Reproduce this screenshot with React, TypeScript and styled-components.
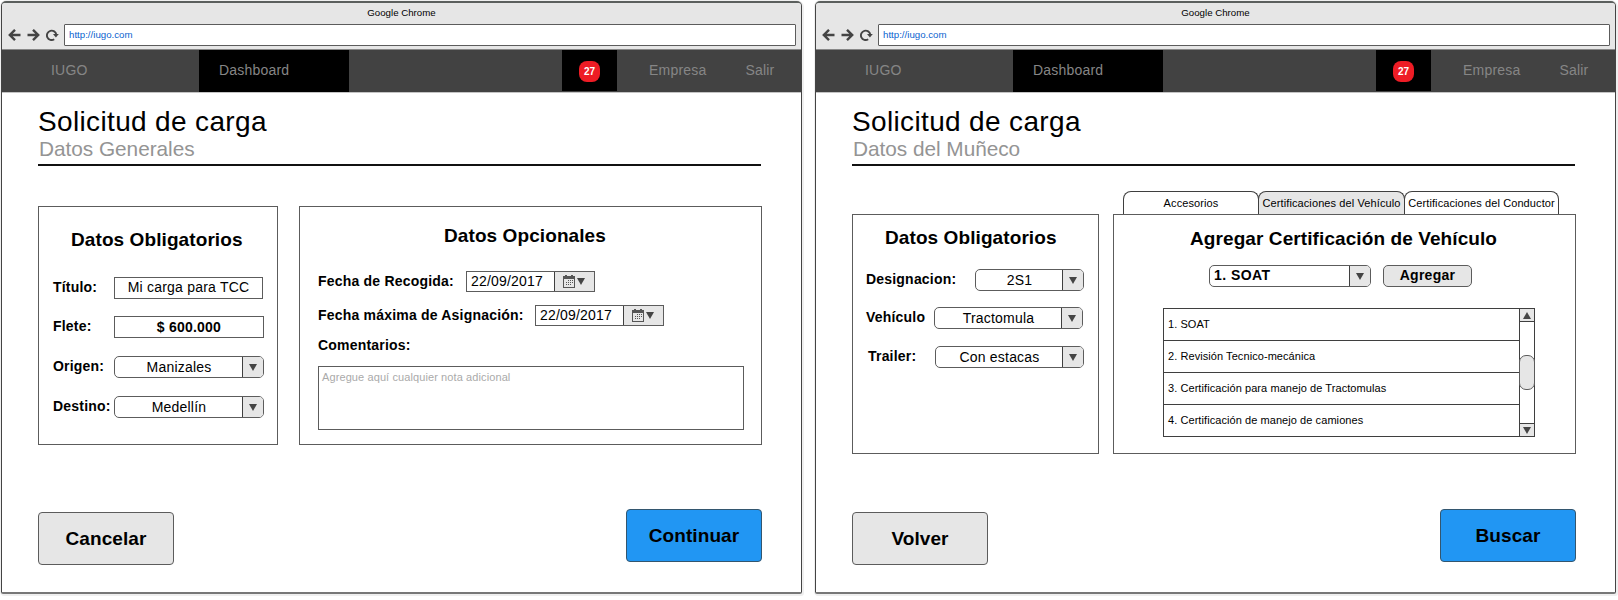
import React from "react";
import styled, { createGlobalStyle, css } from "styled-components";

const LINE = "#5c5c5c";
const DARK = "#3f3f3f";
const FILL = "#e6e6e6";

const GlobalStyle = createGlobalStyle`
  * { box-sizing: border-box; }
  body {
    margin: 0;
    background: #fff;
    overflow: hidden;
    font-family: "Liberation Sans", Arial, sans-serif;
    color: #000;
  }
  h1, h2, h3, p, ul { margin: 0; padding: 0; }
`;

const Board = styled.main`
  display: flex;
  gap: 13px;
  width: 1618px;
  height: 600px;
  padding: 1px 0 0 1px;
`;

const Window = styled.section`
  display: flex;
  flex-direction: column;
  width: 801px;
  height: 593px;
  border: 1px solid #444;
  border-top: 2px solid #5b5f5d;
  border-bottom: 2px solid #777;
  border-radius: 5px 5px 2px 2px;
  box-shadow: 0 0 0 1px #efefef, 1px 1px 0 1px #efefef;
`;

const Chrome = styled.header`
  height: 47px;
  flex: none;
  background: ${FILL};
  border-bottom: 1px solid #888;
  border-radius: 3px 3px 0 0;
`;

const ChromeTitle = styled.div`
  height: 21px;
  line-height: 20px;
  text-align: center;
  font-size: 9.7px;
`;

const ChromeBar = styled.div`
  display: flex;
  align-items: center;
  height: 22px;
  padding: 0 5px 0 6px;
`;

const ChromeIcon = styled.svg`
  flex: none;
  width: 13px;
  height: 13px;
  margin-right: 6px;
  fill: none;
  stroke: #444;
  stroke-width: 2.4;
`;

const Address = styled.div`
  flex: 1;
  height: 22px;
  margin-left: -1px;
  padding-left: 4px;
  border: 1px solid ${LINE};
  border-radius: 1px;
  background: #fff;
  line-height: 20px;
  font-size: 9.7px;
  color: #0a63cf;
`;

const Nav = styled.nav`
  display: flex;
  flex: none;
  height: 43px;
  background: #424242;
  border-bottom: 1px solid #c4c4c4;
  font-size: 14px;
  line-height: 41px;
  letter-spacing: 0.2px;
  color: #868686;
`;

const Brand = styled.div`
  width: 197px;
  padding-left: 49px;
`;

const ActiveItem = styled.div`
  width: 150px;
  height: 42px;
  padding-left: 20px;
  background: #000;
`;

const Notice = styled.div`
  display: flex;
  justify-content: center;
  width: 55px;
  height: 41px;
  margin-left: 213px;
  padding-top: 11px;
  background: #000;
`;

const Badge = styled.span`
  width: 21px;
  height: 21px;
  border-radius: 8px;
  background: #ee1c25;
  color: #fff;
  font-size: 10px;
  font-weight: bold;
  letter-spacing: 0;
  line-height: 21px;
  text-align: center;
`;

const NavLink = styled.div<{ $gap: number }>`
  margin-left: ${(p) => p.$gap}px;
`;

const Page = styled.div`
  flex: 1;
  display: flex;
  flex-direction: column;
  padding: 13px 39px 0 36px;
`;

const Title = styled.h1`
  font-size: 28px;
  font-weight: normal;
  letter-spacing: 0.35px;
  line-height: 31px;
`;

const Subtitle = styled.h2`
  height: 27px;
  padding-left: 1px;
  font-size: 20.8px;
  font-weight: normal;
  letter-spacing: -0.03px;
  line-height: 23px;
  color: #949494;
`;

const Rule = styled.div`
  height: 2px;
  margin-right: 1px;
  background: #111;
`;

const Body = styled.div`
  display: flex;
  align-items: flex-start;
  height: 343px;
`;

const Panel = styled.section<{ $w: number; $h?: number }>`
  flex: none;
  width: ${(p) => p.$w}px;
  height: ${(p) => p.$h ?? 240}px;
  border: 1px solid ${LINE};
`;

const RequiredPanel = styled(Panel)<{ $top: number; $gap: number }>`
  margin-top: ${(p) => p.$top}px;
  margin-right: ${(p) => p.$gap}px;
  padding-left: 13px;
`;

const OptionalPanel = styled(Panel)`
  margin-top: 40px;
  padding-left: 18px;
`;

const Heading = styled.h3<{ $top: number; $left: number }>`
  padding: ${(p) => p.$top}px 0 0 ${(p) => p.$left}px;
  font-size: 19px;
  font-weight: bold;
  letter-spacing: 0.09px;
  line-height: 21px;
  white-space: nowrap;
`;

const Row = styled.div<{ $gap: number; $h?: number; $indent?: number }>`
  display: flex;
  align-items: flex-start;
  height: ${(p) => p.$h ?? 22}px;
  margin-top: ${(p) => p.$gap}px;
  padding-left: ${(p) => p.$indent ?? 0}px;
`;

const Label = styled.label<{ $w: number; $indent?: number }>`
  flex: none;
  width: ${(p) => p.$w}px;
  padding-left: ${(p) => p.$indent ?? 0}px;
  font-size: 14px;
  font-weight: bold;
  letter-spacing: 0.2px;
  line-height: 20px;
  white-space: nowrap;
`;

const TextBox = styled.div<{ $strong?: boolean }>`
  width: ${(p) => (p.$strong ? 150 : 149)}px;
  height: 22px;
  border: 1px solid ${LINE};
  font-size: 14px;
  font-weight: ${(p) => (p.$strong ? "bold" : "normal")};
  letter-spacing: 0.22px;
  line-height: ${(p) => (p.$strong ? 20 : 18)}px;
  text-align: center;
`;

const SelectBox = styled.div<{ $w: number; $strong?: boolean }>`
  display: flex;
  width: ${(p) => p.$w}px;
  height: 22px;
  border: 1px solid ${LINE};
  border-radius: 5px;
  overflow: hidden;
  font-size: 14px;
  letter-spacing: 0.2px;
  line-height: 20px;
  ${(p) =>
    p.$strong &&
    css`
      font-weight: bold;
      letter-spacing: 0.45px;
      line-height: 18px;
    `}
`;

const SelectValue = styled.span<{ $left?: boolean }>`
  flex: 1;
  text-align: ${(p) => (p.$left ? "left" : "center")};
  padding-left: ${(p) => (p.$left ? 4 : 1)}px;
`;

const SelectButton = styled.span`
  display: flex;
  align-items: center;
  justify-content: center;
  width: 21px;
  border-left: 1px solid ${DARK};
  background: ${FILL};
`;

const DateBox = styled.div`
  display: flex;
  width: 129px;
  height: 21px;
  border: 1px solid ${LINE};
  font-size: 14px;
  letter-spacing: 0.2px;
  line-height: 19px;
`;

const DateValue = styled.span`
  flex: 1;
  padding-left: 4px;
`;

const DateButton = styled.span`
  display: flex;
  align-items: center;
  gap: 2px;
  width: 40px;
  padding-left: 8px;
  border-left: 1px solid ${DARK};
  background: ${FILL};
`;

const Notes = styled.div`
  width: 426px;
  height: 64px;
  margin-top: 10px;
  padding-left: 3px;
  border: 1px solid ${LINE};
  font-size: 11px;
  letter-spacing: 0.1px;
  line-height: 21px;
  color: #aaa;
`;

const Tabbed = styled.div`
  flex: none;
  width: 463px;
  margin-top: 25px;
`;

const Tabs = styled.div`
  display: flex;
  height: 23px;
  padding-left: 10px;
`;

const Tab = styled.div<{ $w: number; $selected?: boolean }>`
  width: ${(p) => p.$w}px;
  height: 23px;
  margin-right: -1px;
  border: 1px solid ${DARK};
  border-bottom: 0;
  border-radius: 8px 8px 0 0;
  background: ${(p) => (p.$selected ? FILL : "#fff")};
  font-size: 11px;
  letter-spacing: 0.1px;
  line-height: 23px;
  text-align: center;
  white-space: nowrap;
`;

const AddButton = styled.div`
  width: 89px;
  height: 22px;
  margin-left: 12px;
  border: 1px solid ${LINE};
  border-radius: 5px;
  background: ${FILL};
  font-size: 14px;
  font-weight: bold;
  letter-spacing: 0.28px;
  line-height: 18px;
  text-align: center;
`;

const List = styled.div`
  display: flex;
  width: 372px;
  height: 129px;
  margin: 21px 0 0 49px;
  border: 1px solid ${DARK};
`;

const Items = styled.ul`
  flex: 1;
  list-style: none;
`;

const Item = styled.li`
  height: 32px;
  padding-left: 4px;
  border-bottom: 1px solid ${DARK};
  font-size: 11px;
  letter-spacing: 0.07px;
  line-height: 31px;
  &:last-child { border-bottom: 0; }
`;

const Scrollbar = styled.div`
  display: flex;
  flex-direction: column;
  width: 15px;
  border-left: 1px solid ${DARK};
`;

const ScrollStep = styled.div<{ $end?: boolean }>`
  display: flex;
  align-items: center;
  justify-content: center;
  height: 13px;
  margin-top: ${(p) => (p.$end ? "auto" : 0)};
  background: ${FILL};
  border-bottom: ${(p) => (p.$end ? "0" : `1px solid ${DARK}`)};
  border-top: ${(p) => (p.$end ? `1px solid ${DARK}` : "0")};
`;

const Thumb = styled.div`
  height: 35px;
  margin: 33px -1px 0;
  border: 1px solid ${LINE};
  border-radius: 7px;
  background: ${FILL};
`;

const Actions = styled.footer`
  display: flex;
  justify-content: space-between;
`;

const ActionButton = styled.div<{ $primary?: boolean }>`
  width: 136px;
  height: 53px;
  margin-top: ${(p) => (p.$primary ? 0 : 3)}px;
  border: 1px solid ${(p) => (p.$primary ? "#33566f" : LINE)};
  border-radius: 4px;
  background: ${(p) => (p.$primary ? "#2196f3" : FILL)};
  font-size: 19px;
  font-weight: bold;
  letter-spacing: 0.08px;
  line-height: 51px;
  text-align: center;
`;

const Caret = ({ up = false }: { up?: boolean }) => (
  <svg width="8" height="7" viewBox="0 0 8 7" fill="#444">
    <path d={up ? "M4 0L8 7H0Z" : "M0 0H8L4 7Z"} />
  </svg>
);

const CalendarIcon = () => (
  <svg width="12" height="13" viewBox="0 0 12 13" fill="#555">
    <path d="M0 1H2V0H4V1H8V0H10V1H12V13H0ZM1 4V12H11V4Z" fillRule="evenodd" />
    <path d="M5 5h1v1H5zM7 5h1v1H7zM9 5h1v1H9zM3 7h1v1H3zM5 7h1v1H5zM7 7h1v1H7zM9 7h1v1H9zM3 9h1v1H3zM5 9h1v1H5zM7 9h1v1H7z" />
  </svg>
);

const Select = ({ value, width, strong }: { value: string; width: number; strong?: boolean }) => (
  <SelectBox $w={width} $strong={strong}>
    <SelectValue $left={strong}>{value}</SelectValue>
    <SelectButton><Caret /></SelectButton>
  </SelectBox>
);

const DateField = ({ value }: { value: string }) => (
  <DateBox>
    <DateValue>{value}</DateValue>
    <DateButton><CalendarIcon /><Caret /></DateButton>
  </DateBox>
);

interface BrowserProps {
  subtitle: string;
  back: string;
  next: string;
  children: React.ReactNode;
}

const Browser = ({ subtitle, back, next, children }: BrowserProps) => (
  <Window>
    <Chrome>
      <ChromeTitle>Google Chrome</ChromeTitle>
      <ChromeBar>
        <ChromeIcon viewBox="0 0 13 13"><path d="M12.5 6H2M7 0.8L1.8 6L7 11.2" /></ChromeIcon>
        <ChromeIcon viewBox="0 0 13 13"><path d="M0.5 6H11M6 0.8L11.2 6L6 11.2" /></ChromeIcon>
        <ChromeIcon viewBox="0 0 13 13">
          <path d="M8.2 10.3A4.7 4.7 0 1 1 10.3 5.7" strokeWidth="1.9" />
          <path d="M7 5.1H12.8L9.9 8.5Z" fill="#444" stroke="none" />
        </ChromeIcon>
        <Address>http://iugo.com</Address>
      </ChromeBar>
    </Chrome>
    <Nav>
      <Brand>IUGO</Brand>
      <ActiveItem>Dashboard</ActiveItem>
      <Notice><Badge>27</Badge></Notice>
      <NavLink $gap={32}>Empresa</NavLink>
      <NavLink $gap={39}>Salir</NavLink>
    </Nav>
    <Page>
      <Title>Solicitud de carga</Title>
      <Subtitle>{subtitle}</Subtitle>
      <Rule />
      <Body>{children}</Body>
      <Actions>
        <ActionButton>{back}</ActionButton>
        <ActionButton $primary>{next}</ActionButton>
      </Actions>
    </Page>
  </Window>
);

const certificates = [
  "1. SOAT",
  "2. Revisión Tecnico-mecánica",
  "3. Certificación para manejo de Tractomulas",
  "4. Certificación de manejo de camiones",
];

export default function App() {
  return (
    <Board>
      <GlobalStyle />
      <Browser subtitle="Datos Generales" back="Cancelar" next="Continuar">
        <RequiredPanel $w={240} $h={239} $top={40} $gap={21}>
          <Heading $top={22} $left={19}>Datos Obligatorios</Heading>
          <Row $gap={27}>
            <Label $w={62} $indent={1}>Título:</Label>
            <TextBox>Mi carga para TCC</TextBox>
          </Row>
          <Row $gap={17}>
            <Label $w={62} $indent={1}>Flete:</Label>
            <TextBox $strong>$ 600.000</TextBox>
          </Row>
          <Row $gap={18}>
            <Label $w={62} $indent={1}>Origen:</Label>
            <Select value="Manizales" width={150} />
          </Row>
          <Row $gap={18}>
            <Label $w={62} $indent={1}>Destino:</Label>
            <Select value="Medellín" width={150} />
          </Row>
        </RequiredPanel>
        <OptionalPanel $w={463} $h={239}>
          <Heading $top={18} $left={126}>Datos Opcionales</Heading>
          <Row $gap={25} $h={21}>
            <Label $w={148}>Fecha de Recogida:</Label>
            <DateField value="22/09/2017" />
          </Row>
          <Row $gap={13} $h={21}>
            <Label $w={217}>Fecha máxima de Asignación:</Label>
            <DateField value="22/09/2017" />
          </Row>
          <Row $gap={9} $h={21}>
            <Label $w={148}>Comentarios:</Label>
          </Row>
          <Notes>Agregue aquí cualquier nota adicional</Notes>
        </OptionalPanel>
      </Browser>
      <Browser subtitle="Datos del Muñeco" back="Volver" next="Buscar">
        <RequiredPanel $w={247} $top={48} $gap={14}>
          <Heading $top={12} $left={19}>Datos Obligatorios</Heading>
          <Row $gap={21}>
            <Label $w={109}>Designacion:</Label>
            <Select value="2S1" width={109} />
          </Row>
          <Row $gap={16}>
            <Label $w={68}>Vehículo</Label>
            <Select value="Tractomula" width={149} />
          </Row>
          <Row $gap={17}>
            <Label $w={69} $indent={2}>Trailer:</Label>
            <Select value="Con estacas" width={149} />
          </Row>
        </RequiredPanel>
        <Tabbed>
          <Tabs>
            <Tab $w={136}>Accesorios</Tab>
            <Tab $w={147} $selected>Certificaciones del Vehículo</Tab>
            <Tab $w={155}>Certificaciones del Conductor</Tab>
          </Tabs>
          <Panel $w={463}>
            <Heading $top={13} $left={76}>Agregar Certificación de Vehículo</Heading>
            <Row $gap={16} $indent={95}>
              <Select value="1. SOAT" width={162} strong />
              <AddButton>Agregar</AddButton>
            </Row>
            <List>
              <Items>
                {certificates.map((c) => <Item key={c}>{c}</Item>)}
              </Items>
              <Scrollbar>
                <ScrollStep><Caret up /></ScrollStep>
                <Thumb />
                <ScrollStep $end><Caret /></ScrollStep>
              </Scrollbar>
            </List>
          </Panel>
        </Tabbed>
      </Browser>
    </Board>
  );
}
